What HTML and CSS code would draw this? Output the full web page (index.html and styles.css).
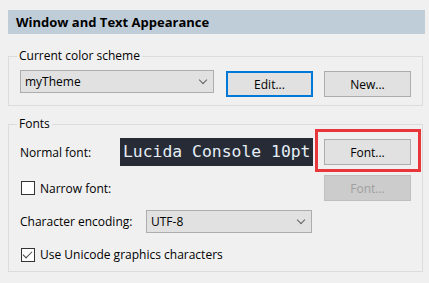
FILE: index.html
```html
<!DOCTYPE html>
<html lang="en">
<head>
<title>Window and Text Appearance</title>
<meta charset="UTF-8">
<link rel="stylesheet" href="styles.css">
</head>
<body>
<div class="title">Window and Text Appearance</div>

<fieldset class="group scheme">
    <legend>Current color scheme</legend>
    <div class="row">
        <div class="combo scheme-combo">myTheme<span class="arrow"></span></div>
        <button class="button focused">Edit...</button>
        <button class="button">New...</button>
    </div>
</fieldset>

<fieldset class="group fonts">
    <legend>Fonts</legend>
    <div class="row font-row">
        <span class="label normal-label">Normal font:</span>
        <div class="preview">Lucida Console 10pt</div>
        <div class="marked"><button class="button">Font...</button></div>
    </div>
    <div class="row narrow-row">
        <label class="check narrow"><span class="box"></span>Narrow font:</label>
        <button class="button" disabled>Font...</button>
    </div>
    <div class="row enc-row">
        <span class="label enc-label">Character encoding:</span>
        <div class="combo enc-combo">UTF-8<span class="arrow"></span></div>
    </div>
    <label class="check unicode"><span class="box checked"></span>Use Unicode graphics characters</label>
</fieldset>
</body>
</html>
```

FILE: styles.css
```css
body {
    margin: 0;
    padding: 10px 4px 0 8px;
    background-color: #F0F0F0;
    font-family: "Open Sans", "Liberation Sans", Arial, sans-serif;
    font-size: 12px;
    color: #000;
}

.title {
    height: 24px;
    line-height: 24px;
    padding-left: 8px;
    background-color: #BFCDD9;
    font-weight: bold;
    font-size: 13px;
}

.group {
    width: 415px;
    margin: 0;
    border: 1px solid #DCDCDC;
    padding: 6px 0 0 11px;
    box-sizing: border-box;
}

.group legend {
    line-height: 16px;
    padding: 0 2px;
    margin-left: -3px;
}

.scheme {
    margin-top: 14px;
    height: 58px;
}

.fonts {
    margin-top: 10px;
    height: 156px;
}

.row {
    display: flex;
    align-items: center;
}

.scheme .row {
    align-items: flex-start;
}

.combo {
    position: relative;
    height: 23px;
    line-height: 21px;
    box-sizing: border-box;
    border: 1px solid #ADADAD;
    background-color: #E1E1E1;
    padding-left: 4px;
}

.arrow {
    position: absolute;
    right: 7px;
    top: 6px;
    width: 5px;
    height: 5px;
    border-right: 1px solid #606060;
    border-bottom: 1px solid #606060;
    transform: rotate(45deg);
}

.scheme-combo {
    width: 194px;
    margin-right: 12px;
}

.button {
    width: 87px;
    height: 26px;
    box-sizing: border-box;
    border: 1px solid #ADADAD;
    background-color: #E1E1E1;
    font-family: inherit;
    font-size: 12px;
    color: #000;
    padding: 0;
    margin: 1px 11px 0 0;
}

.button.focused {
    border: 2px solid #0078D7;
}

.button:disabled {
    background-color: #CCCCCC;
    border-color: #BFBFBF;
    color: #A0A0A0;
}

.fonts .button {
    margin: 0;
}

.font-row {
    height: 28px;
}

.normal-label {
    width: 100px;
}

.preview {
    width: 193px;
    height: 28px;
    line-height: 28px;
    box-sizing: border-box;
    background-color: #272B36;
    color: #E6EEF5;
    font-family: "DejaVu Sans Mono", "Liberation Mono", monospace;
    font-size: 16.4px;
    padding-left: 3px;
    white-space: nowrap;
    overflow: hidden;
    margin-right: 11px;
}

.marked {
    position: relative;
    height: 26px;
}

.marked::after {
    content: "";
    position: absolute;
    top: -10px;
    left: -9px;
    right: -10px;
    bottom: -7px;
    border: 3px solid #E8373A;
}

.narrow-row {
    margin-top: 9px;
}

.narrow {
    width: 304px;
}

.enc-row {
    margin-top: 9px;
}

.enc-label {
    width: 126px;
}

.enc-combo {
    width: 166px;
}

.check {
    display: flex;
    align-items: center;
}

.unicode {
    margin-top: 13px;
}

.box {
    width: 14px;
    height: 14px;
    box-sizing: border-box;
    border: 1px solid #333;
    background-color: #FFF;
    margin: 0 5px 0 1px;
    position: relative;
}

.box.checked::after {
    content: "";
    position: absolute;
    left: 3px;
    top: 0;
    width: 4px;
    height: 8px;
    border-right: 1px solid #444;
    border-bottom: 1px solid #444;
    transform: rotate(45deg);
}
```
